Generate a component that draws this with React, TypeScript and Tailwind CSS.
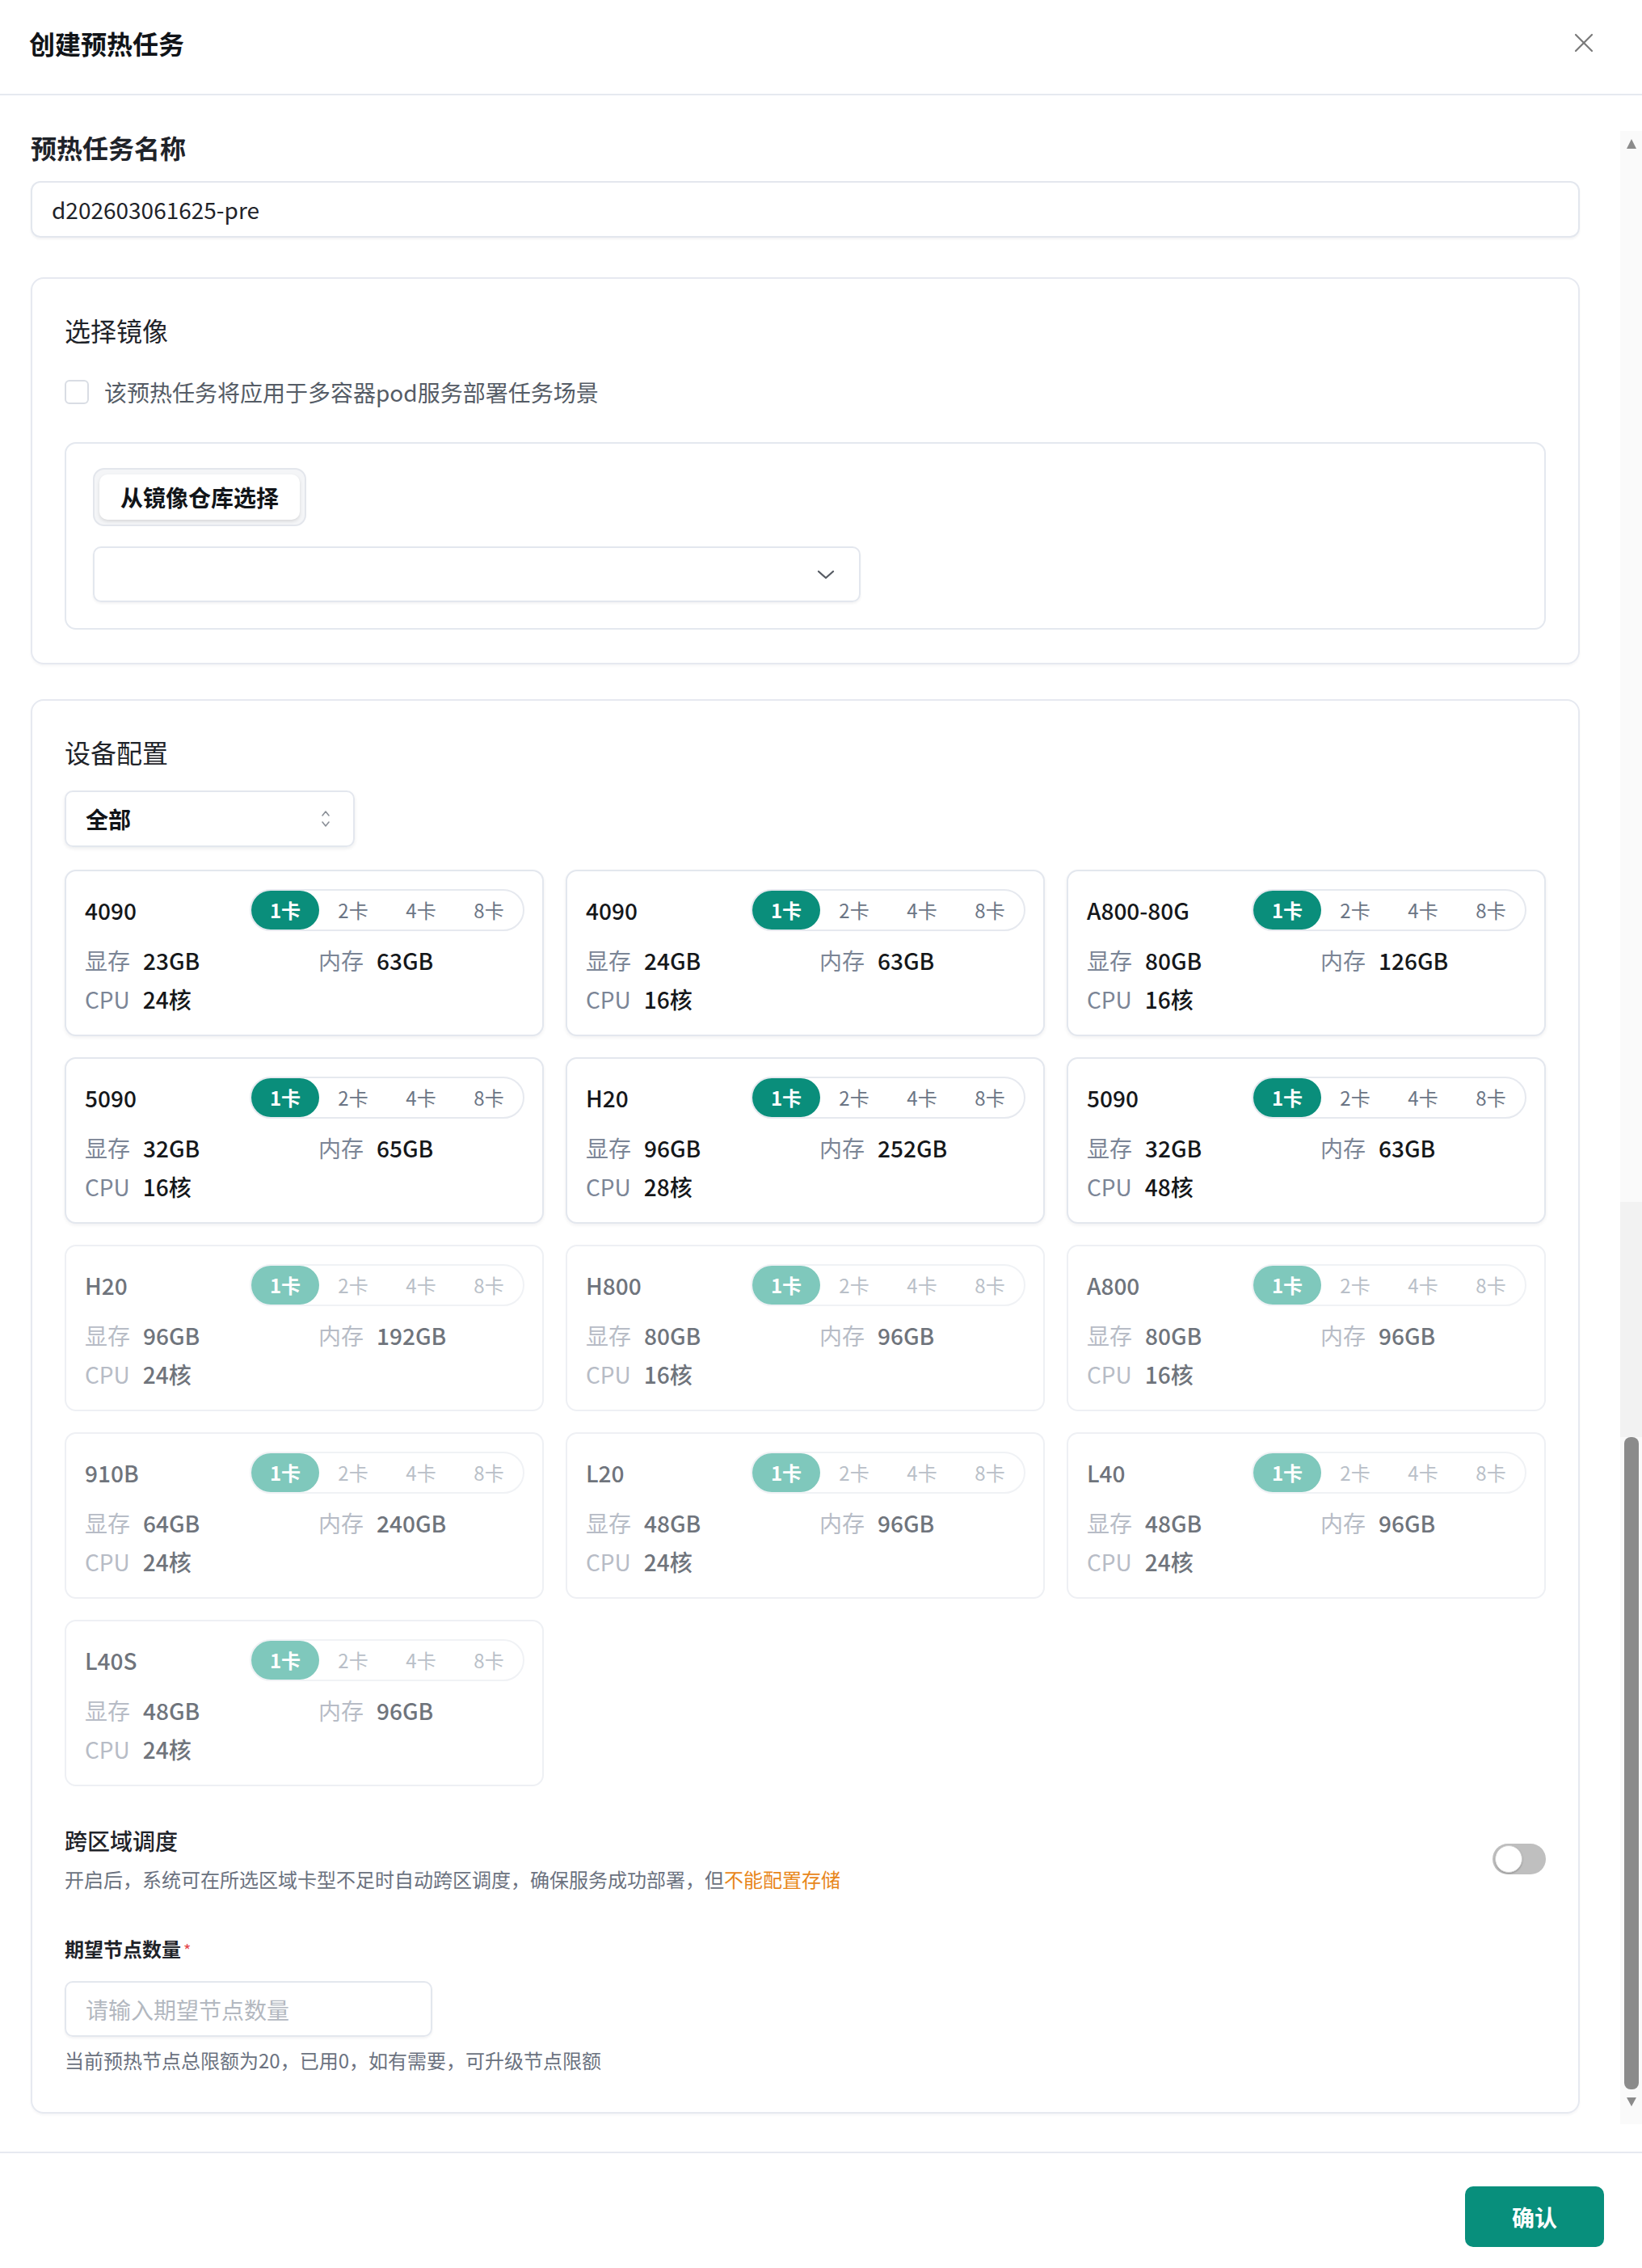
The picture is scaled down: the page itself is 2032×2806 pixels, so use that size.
import { X } from "lucide-react";

type Gpu = { name: string; vram: string; mem: string; cpu: string; on: boolean };

const gpus: Gpu[] = [
  { name: "4090", vram: "23GB", mem: "63GB", cpu: "24核", on: true },
  { name: "4090", vram: "24GB", mem: "63GB", cpu: "16核", on: true },
  { name: "A800-80G", vram: "80GB", mem: "126GB", cpu: "16核", on: true },
  { name: "5090", vram: "32GB", mem: "65GB", cpu: "16核", on: true },
  { name: "H20", vram: "96GB", mem: "252GB", cpu: "28核", on: true },
  { name: "5090", vram: "32GB", mem: "63GB", cpu: "48核", on: true },
  { name: "H20", vram: "96GB", mem: "192GB", cpu: "24核", on: false },
  { name: "H800", vram: "80GB", mem: "96GB", cpu: "16核", on: false },
  { name: "A800", vram: "80GB", mem: "96GB", cpu: "16核", on: false },
  { name: "910B", vram: "64GB", mem: "240GB", cpu: "24核", on: false },
  { name: "L20", vram: "48GB", mem: "96GB", cpu: "24核", on: false },
  { name: "L40", vram: "48GB", mem: "96GB", cpu: "24核", on: false },
  { name: "L40S", vram: "48GB", mem: "96GB", cpu: "24核", on: false },
];

const counts = ["1卡", "2卡", "4卡", "8卡"];

const GpuCard = ({ gpu }: { gpu: Gpu }) => {
  const label = gpu.on ? "text-[#7b8596]" : "text-[#b7bcc6]";
  const value = gpu.on ? "text-[#15171a]" : "text-[#6f747c]";
  return (
    <div
      className={`h-[206px] rounded-[14px] border-2 bg-white pl-[23px] pr-[22px] pt-[22px] ${
        gpu.on ? "border-[#e3e7ee] shadow-[0_2px_4px_rgba(15,23,42,0.06)]" : "border-[#eef0f4]"
      }`}
    >
      <div className="flex items-center justify-between">
        <span className={`text-[28px] leading-[40px] font-medium ${value}`}>{gpu.name}</span>
        <div className={`flex h-[52px] w-[340px] rounded-full border-2 ${gpu.on ? "border-[#e6e9ef]" : "border-[#f0f2f5]"}`}>
          {counts.map((c, i) => (
            <div
              key={c}
              className={`flex h-full flex-1 items-center justify-center rounded-full text-[24px] ${
                i === 0
                  ? gpu.on
                    ? "bg-[#0a8e7b] font-bold text-white"
                    : "bg-[#7fc8bc] font-bold text-white"
                  : gpu.on
                  ? "text-[#6b7585]"
                  : "text-[#b9bfc8]"
              }`}
            >
              {c}
            </div>
          ))}
        </div>
      </div>
      <div className="mt-[16px] grid grid-cols-[289px_1fr] text-[28px] leading-[40px]">
        <div className="flex gap-[16px]">
          <span className={label}>显存</span>
          <span className={`font-medium ${value}`}>{gpu.vram}</span>
        </div>
        <div className="flex gap-[16px]">
          <span className={label}>内存</span>
          <span className={`font-medium ${value}`}>{gpu.mem}</span>
        </div>
      </div>
      <div className="mt-[8px] flex gap-[16px] text-[28px] leading-[40px]">
        <span className={label}>CPU</span>
        <span className={`font-medium ${value}`}>{gpu.cpu}</span>
      </div>
    </div>
  );
};

const Scrollbar = () => (
  <div className="ml-auto mt-[44px] mb-[34px] flex w-[27px] flex-col items-center bg-[#fafafa] pt-[8px] pb-[20px]">
    <svg width="16" height="16" viewBox="0 0 16 16">
      <path d="M8 2 L14 14 L2 14 Z" fill="#8b8b8b" />
    </svg>
    <div className="flex-1" />
    <div className="h-[291px] w-full bg-[#f2f2f2]" />
    <div className="h-[807px] w-[18px] rounded-[8px] bg-[#8b8b8b]" />
    <div className="h-[8px]" />
    <svg width="16" height="15" viewBox="0 0 16 15">
      <path d="M2 2 L14 2 L8 13 Z" fill="#8b8b8b" />
    </svg>
  </div>
);

export default function App() {
  return (
    <div className="flex h-[2806px] w-[2032px] flex-col bg-white font-['Noto_Sans_CJK_SC','Noto_Sans',sans-serif] text-[#1f2329]">
      {/* header */}
      <div className="flex h-[118px] shrink-0 items-center justify-between border-b-2 border-[#e6e9f0] pb-[10px] pl-[36px] pr-[52px]">
        <h1 className="text-[32px] leading-[44px] font-bold text-[#111418]">创建预热任务</h1>
        <X size={40} strokeWidth={1.3} className="text-[#7a7a7a]" />
      </div>

      {/* body */}
      <div className="flex min-h-0 flex-1">
        <div className="ml-[38px] w-[1917px] pt-[42px]">
          <div className="text-[32px] leading-[44px] font-semibold text-[#1f2329]">预热任务名称</div>
          <div className="mt-[20px] flex h-[70px] items-center rounded-[12px] border-2 border-[#e3e7ee] pl-[24px] text-[28px] text-[#1f2329] shadow-[0_2px_3px_rgba(15,23,42,0.05)]">
            d202603061625-pre
          </div>

          {/* 选择镜像 */}
          <div className="mt-[49px] rounded-[16px] border-2 border-[#e6e9f0] px-[40px] pt-[41px] pb-[41px] shadow-[0_2px_3px_rgba(15,23,42,0.04)]">
            <div className="text-[32px] leading-[44px] text-[#1f2329]">选择镜像</div>
            <div className="mt-[39px] flex h-[32px] items-center gap-[19px]">
              <span className="h-[30px] w-[30px] rounded-[6px] border-2 border-[#d9dde4] bg-white" />
              <span className="text-[28px] text-[#555c66]">该预热任务将应用于多容器pod服务部署任务场景</span>
            </div>
            <div className="mt-[46px] rounded-[14px] border-2 border-[#e4e8ef] px-[33px] pt-[30px] pb-[32px]">
              <div className="inline-flex rounded-[14px] border-2 border-[#e3e6ec] bg-[#f4f5f7] p-[6px]">
                <div className="flex h-[56px] items-center rounded-[10px] bg-white px-[26px] text-[28px] font-bold text-[#111418] shadow-[0_2px_4px_rgba(0,0,0,0.12)]">
                  从镜像仓库选择
                </div>
              </div>
              <div className="mt-[25px] flex h-[69px] w-[950px] items-center justify-end rounded-[10px] border-2 border-[#e3e7ee] pr-[30px] shadow-[0_2px_3px_rgba(15,23,42,0.05)]">
                <svg width="22" height="14" viewBox="0 0 22 14" fill="none">
                  <path d="M2 3 L11 11 L20 3" stroke="#555a62" strokeWidth="2.2" strokeLinecap="round" strokeLinejoin="round" />
                </svg>
              </div>
            </div>
          </div>

          {/* 设备配置 */}
          <div className="mt-[43px] rounded-[16px] border-2 border-[#e6e9f0] px-[40px] pt-[41px] pb-[48px] shadow-[0_2px_3px_rgba(15,23,42,0.04)]">
            <div className="text-[32px] leading-[44px] text-[#1f2329]">设备配置</div>
            <div className="mt-[26px] flex h-[70px] w-[359px] items-center justify-between rounded-[10px] border-2 border-[#e3e7ee] pl-[24px] pr-[28px] shadow-[0_2px_4px_rgba(15,23,42,0.08)]">
              <span className="text-[28px] font-semibold text-[#111418]">全部</span>
              <svg width="12" height="24" viewBox="0 0 12 24" fill="none">
                <path d="M2 8 L6 3 L10 8" stroke="#8a8f97" strokeWidth="1.6" strokeLinecap="round" strokeLinejoin="round" />
                <path d="M2 16 L6 21 L10 16" stroke="#8a8f97" strokeWidth="1.6" strokeLinecap="round" strokeLinejoin="round" />
              </svg>
            </div>

            <div className="mt-[28px] grid grid-cols-3 gap-x-[27px] gap-y-[26px]">
              {gpus.map((g, i) => (
                <GpuCard key={i} gpu={g} />
              ))}
            </div>

            <div className="mt-[48px] flex items-center justify-between">
              <div>
                <div className="text-[28px] leading-[38px] font-medium text-[#1f2329]">跨区域调度</div>
                <div className="mt-[12px] text-[24px] leading-[34px] text-[#6b7280]">
                  开启后，系统可在所选区域卡型不足时自动跨区调度，确保服务成功部署，但
                  <span className="text-[#e8861a]">不能配置存储</span>
                </div>
              </div>
              <div className="flex h-[38px] w-[66px] items-center rounded-full bg-[#bfbfbf] p-[3px]">
                <span className="h-[34px] w-[34px] rounded-full border border-[#d0d0d0] bg-white shadow-[0_1px_2px_rgba(0,0,0,0.25)]" />
              </div>
            </div>

            <div className="mt-[52px] text-[24px] leading-[34px] font-bold text-[#1f2329]">
              期望节点数量<span className="ml-[3px] text-[20px] font-normal text-[#e5484d]">*</span>
            </div>
            <div className="mt-[21px] flex h-[69px] w-[455px] items-center rounded-[10px] border-2 border-[#e3e7ee] pl-[24px] text-[28px] text-[#b3b8c0] shadow-[0_2px_3px_rgba(15,23,42,0.05)]">
              请输入期望节点数量
            </div>
            <div className="mt-[13px] text-[24px] leading-[32px] text-[#6b7280]">
              当前预热节点总限额为20，已用0，如有需要，可升级节点限额
            </div>
          </div>
        </div>
        <Scrollbar />
      </div>

      {/* footer */}
      <div className="flex h-[144px] shrink-0 items-start justify-end border-t-2 border-[#e6e9f0] pt-[41px] pr-[47px]">
        <button className="h-[75px] w-[172px] rounded-[10px] bg-[#088f7c] text-[28px] font-bold text-white">确认</button>
      </div>
    </div>
  );
}
